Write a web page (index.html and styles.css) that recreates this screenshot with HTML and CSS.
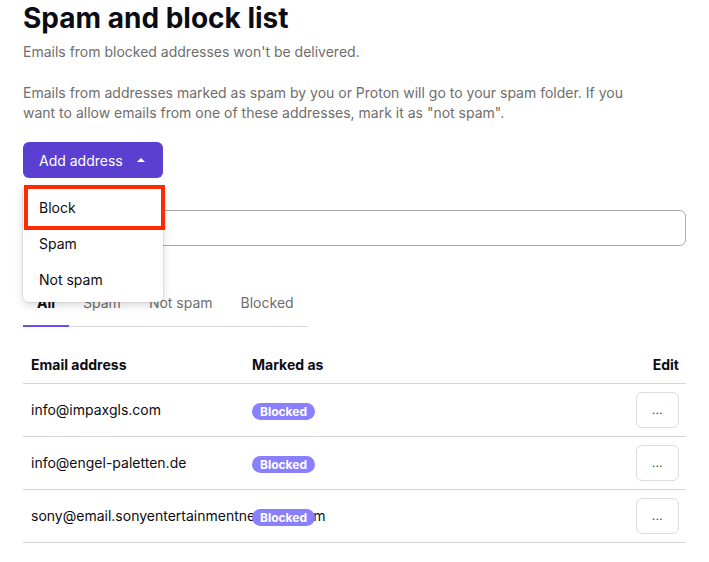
FILE: index.html
```html
<!DOCTYPE html>
<html>
<head>
<meta charset="utf-8">
<link rel="stylesheet" href="styles.css">
</head>
<body>
<main class="page">
  <h1 class="title">Spam and block list</h1>
  <p class="desc">Emails from blocked addresses won't be delivered.</p>
  <p class="desc desc-long">Emails from addresses marked as spam by you or Proton will go to your spam folder. If you want to allow emails from one of these addresses, mark it as "not spam".</p>

  <div class="add-wrap">
    <button class="btn-primary">Add address <span class="caret"></span></button>
    <div class="dropdown">
      <div class="dd-item">Block</div>
      <div class="dd-item">Spam</div>
      <div class="dd-item">Not spam</div>
      <div class="highlight"></div>
    </div>
  </div>

  <div class="search"></div>

  <div class="tabs">
    <div class="tab active">All</div>
    <div class="tab">Spam</div>
    <div class="tab">Not spam</div>
    <div class="tab">Blocked</div>
  </div>

  <div class="table">
    <div class="row head">
      <div class="c-email">Email address</div>
      <div class="c-mark">Marked as</div>
      <div class="c-edit">Edit</div>
    </div>
    <div class="row">
      <div class="c-email">info@impaxgls.com</div>
      <div class="c-mark"><span class="badge">Blocked</span></div>
      <div class="c-edit"><button class="btn-edit">...</button></div>
    </div>
    <div class="row">
      <div class="c-email">info@engel-paletten.de</div>
      <div class="c-mark"><span class="badge">Blocked</span></div>
      <div class="c-edit"><button class="btn-edit">...</button></div>
    </div>
    <div class="row">
      <div class="c-email">sony@email.sonyentertainmentnetwork.com</div>
      <div class="c-mark"><span class="badge">Blocked</span></div>
      <div class="c-edit"><button class="btn-edit">...</button></div>
    </div>
  </div>
</main>
</body>
</html>
```

FILE: styles.css
```css
* { box-sizing: border-box; }
html, body { margin: 0; padding: 0; background: #fff; }
body {
  font-family: Inter, "Noto Sans", "Liberation Sans", sans-serif;
  color: #0c0c14;
  font-size: 14px;
  line-height: 20px;
}
.page {
  width: 663px;
  margin-left: 23px;
}
.title {
  margin: 0;
  font-size: 28px;
  line-height: 36px;
  font-weight: 700;
}
.desc {
  margin: 6px 0 0;
  color: #706d6b;
  font-size: 14px;
  line-height: 20px;
}
.desc-long {
  margin-top: 21px;
  width: 610px;
}
.add-wrap {
  position: relative;
  margin-top: 19px;
  height: 36px;
}
.btn-primary {
  display: inline-flex;
  align-items: center;
  gap: 14px;
  height: 36px;
  width: 140px;
  padding: 0 16px;
  border: 0;
  border-radius: 6px;
  background: #5b3fd1;
  color: #fff;
  font-family: inherit;
  font-size: 14px;
}
.caret {
  width: 0;
  height: 0;
  border-left: 4px solid transparent;
  border-right: 4px solid transparent;
  border-bottom: 4px solid #fff;
}
.dropdown {
  position: absolute;
  left: 0;
  top: 44px;
  width: 140px;
  padding: 4px 0;
  background: #fff;
  border-radius: 6px;
  box-shadow: 0 0 0 1px rgba(0,0,0,0.06), 0 3px 10px rgba(0,0,0,0.16);
  z-index: 5;
}
.dd-item {
  height: 36px;
  line-height: 36px;
  padding-left: 16px;
  font-size: 14px;
}
.highlight {
  position: absolute;
  left: 1px;
  top: -1px;
  width: 141px;
  height: 45px;
  border: 4px solid #fe2a00;
}
.search {
  margin-top: 32px;
  height: 36px;
  border: 1px solid #adadad;
  border-radius: 6px;
}
.tabs {
  margin-top: 36px;
  display: inline-flex;
  border-bottom: 1px solid #d6d6d6;
}
.tab {
  padding: 11px 14px 13px;
  color: #706d6b;
  font-size: 14px;
  line-height: 20px;
  position: relative;
}
.tab.active {
  color: #0c0c14;
  font-weight: 700;
}
.tab.active::after {
  content: "";
  position: absolute;
  left: 0;
  right: 0;
  bottom: -1px;
  height: 2px;
  background: #6d4aff;
}
.table {
  margin-top: 20px;
}
.row {
  display: grid;
  grid-template-columns: 221px 1fr 60px;
  align-items: center;
  height: 53px;
  padding: 0 7px 0 8px;
  border-bottom: 1px solid #d4d4d4;
}
.row.head {
  height: 37px;
  font-weight: 700;
}
.c-email {
  white-space: nowrap;
  overflow: visible;
}
.c-mark { position: relative; }
.c-edit { text-align: right; }
.badge {
  display: inline-block;
  height: 17px;
  line-height: 17px;
  padding: 0 8px;
  border-radius: 9px;
  background: #8a7ffd;
  color: #fff;
  font-size: 12px;
  font-weight: 700;
  vertical-align: middle;
}
.btn-edit {
  width: 43px;
  height: 36px;
  border: 1px solid #dcdcdc;
  border-radius: 6px;
  background: #fff;
  color: #333;
  font-family: inherit;
  font-size: 11px;
  letter-spacing: 0.5px;
  padding: 0;
  line-height: 30px;
}
```
